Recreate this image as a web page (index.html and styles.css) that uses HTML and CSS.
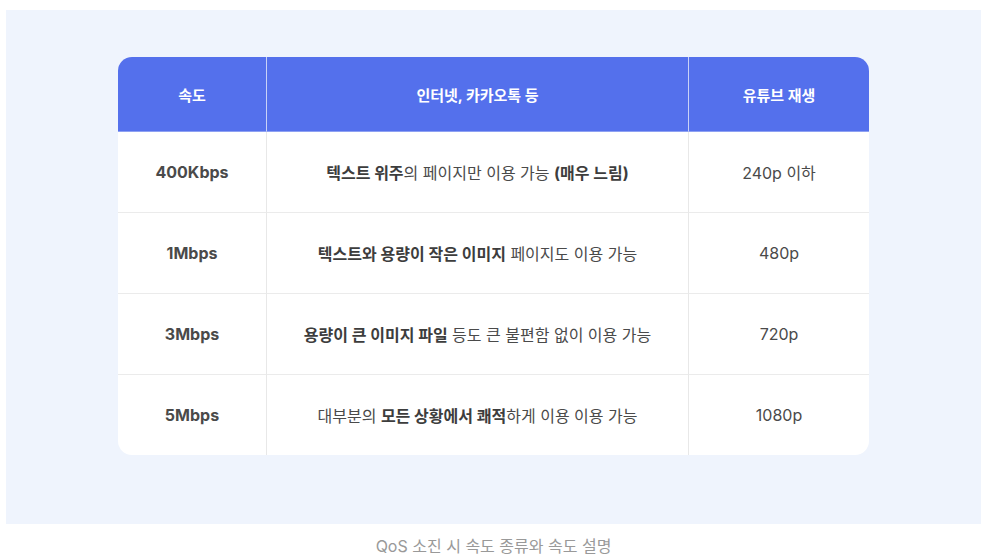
FILE: index.html
```html
<!DOCTYPE html>
<html lang="ko">
<head>
  <meta charset="UTF-8" />
  <meta name="viewport" content="width=device-width, initial-scale=1.0"/>
  <title>QoS 소진 시 속도</title>
  <link rel="stylesheet" href="styles.css">
</head>
<body>
  <figure class="figure">
    <div class="panel">
      <table class="speed-table">
        <thead>
          <tr>
            <th class="col-speed">속도</th>
            <th class="col-web">인터넷, 카카오톡 등</th>
            <th class="col-video">유튜브 재생</th>
          </tr>
        </thead>
        <tbody>
          <tr>
            <td class="speed">400Kbps</td>
            <td><b>텍스트 위주</b>의 페이지만 이용 가능 <b>(매우 느림)</b></td>
            <td>240p 이하</td>
          </tr>
          <tr>
            <td class="speed">1Mbps</td>
            <td><b>텍스트와 용량이 작은 이미지</b> 페이지도 이용 가능</td>
            <td>480p</td>
          </tr>
          <tr>
            <td class="speed">3Mbps</td>
            <td><b>용량이 큰 이미지 파일</b> 등도 큰 불편함 없이 이용 가능</td>
            <td>720p</td>
          </tr>
          <tr>
            <td class="speed">5Mbps</td>
            <td>대부분의 <b>모든 상황에서 쾌적</b>하게 이용 이용 가능</td>
            <td>1080p</td>
          </tr>
        </tbody>
      </table>
    </div>
    <figcaption class="caption">QoS 소진 시 속도 종류와 속도 설명</figcaption>
  </figure>
</body>
</html>
```

FILE: styles.css
```css
body {
  margin: 0;
  background: #fff;
  font-family: Inter, "Noto Sans CJK KR", sans-serif;
  color: #444;
}

.figure {
  margin: 10px 6px 0 6px;
}

.panel {
  background: #eff4fd;
  padding: 47px 0 69px;
}

.speed-table {
  width: 751px;
  margin: 0 auto;
  table-layout: fixed;
  border-collapse: separate;
  border-spacing: 0;
  background: #fff;
  border-radius: 14px;
  overflow: hidden;
  font-size: 16px;
  text-align: center;
}

.speed-table th {
  height: 74px;
  padding: 0;
  background: #5470ec;
  color: #fff;
  font-weight: 700;
  font-size: 15px;
  border-left: 1px solid #c9d2f7;
  border-bottom: 1px solid #8ea1f2;
}

.speed-table th:first-child,
.speed-table td:first-child {
  border-left: none;
}

.col-speed { width: 148px; }
.col-video { width: 180px; }

.speed-table td {
  height: 80px;
  padding: 0;
  color: #4a4a4a;
  border-left: 1px solid #e8e8e8;
  border-top: 1px solid #ebebeb;
}

.speed-table tbody tr:first-child td {
  border-top: none;
}

.speed-table td b {
  font-weight: 700;
  color: #3d3d3d;
}

.speed-table td.speed {
  font-size: 16px;
  font-weight: 700;
}

.caption {
  margin: 9px 0 0;
  text-align: center;
  font-size: 16px;
  color: #999;
}
```
